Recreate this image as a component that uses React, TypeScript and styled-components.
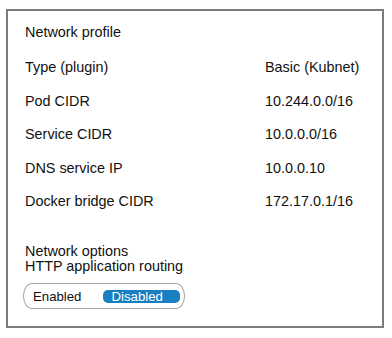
import React from 'react'
import styled, { createGlobalStyle } from 'styled-components'

const GlobalStyle = createGlobalStyle`
    html, body {
        margin: 0;
        padding: 0;
        background: #ffffff;
    }
    body {
        font-family: "Liberation Sans", Arial, sans-serif;
        font-size: 14.4px;
        color: #111111;
    }
`

const Page = styled.div`
    width: 392px;
    height: 338px;
    padding: 9px 0 0 6px;
    box-sizing: border-box;
`

const Frame = styled.div`
    width: 378px;
    height: 319px;
    box-sizing: border-box;
    border: 2px solid #7c7c7c;
    padding: 13px 0 0 17px;
    display: flex;
    flex-direction: column;
`

const Title = styled.div`
    height: 35px;
    line-height: 16px;
    flex-shrink: 0;
`

const Row = styled.div`
    display: grid;
    grid-template-columns: 240px 1fr;
    height: 33.5px;
    flex-shrink: 0;
    line-height: 16px;
`

const Options = styled.div`
    margin-top: 17.5px;
    line-height: 14.5px;
`

const Toggle = styled.div`
    margin: 10px 0 0 -2px;
    width: 162px;
    height: 26px;
    box-sizing: border-box;
    border: 1px solid #a4a4a4;
    border-radius: 9px / 13px;
    display: flex;
    align-items: center;
    padding: 0 4px 0 9px;
    font-size: 13.2px;
`

const Choice = styled.div<{ $active?: boolean }>`
    height: 13px;
    line-height: 13px;
    box-sizing: border-box;
    width: ${p => (p.$active ? '78px' : '70px')};
    padding-left: ${p => (p.$active ? '9px' : '0')};
    border-radius: 5px;
    background: ${p => (p.$active ? '#1a7fc1' : 'transparent')};
    color: ${p => (p.$active ? '#ffffff' : '#111111')};
`

const rows: [string, string][] = [
    ['Type (plugin)', 'Basic (Kubnet)'],
    ['Pod CIDR', '10.244.0.0/16'],
    ['Service CIDR', '10.0.0.0/16'],
    ['DNS service IP', '10.0.0.10'],
    ['Docker bridge CIDR', '172.17.0.1/16'],
]

const App = () => {
    return (
        <Page>
            <GlobalStyle />
            <Frame>
                <Title>Network profile</Title>
                {rows.map(([label, value]) => (
                    <Row key={label}>
                        <span>{label}</span>
                        <span>{value}</span>
                    </Row>
                ))}
                <Options>
                    <div>Network options</div>
                    <div>HTTP application routing</div>
                </Options>
                <Toggle>
                    <Choice>Enabled</Choice>
                    <Choice $active>Disabled</Choice>
                </Toggle>
            </Frame>
        </Page>
    )
}

export default App
